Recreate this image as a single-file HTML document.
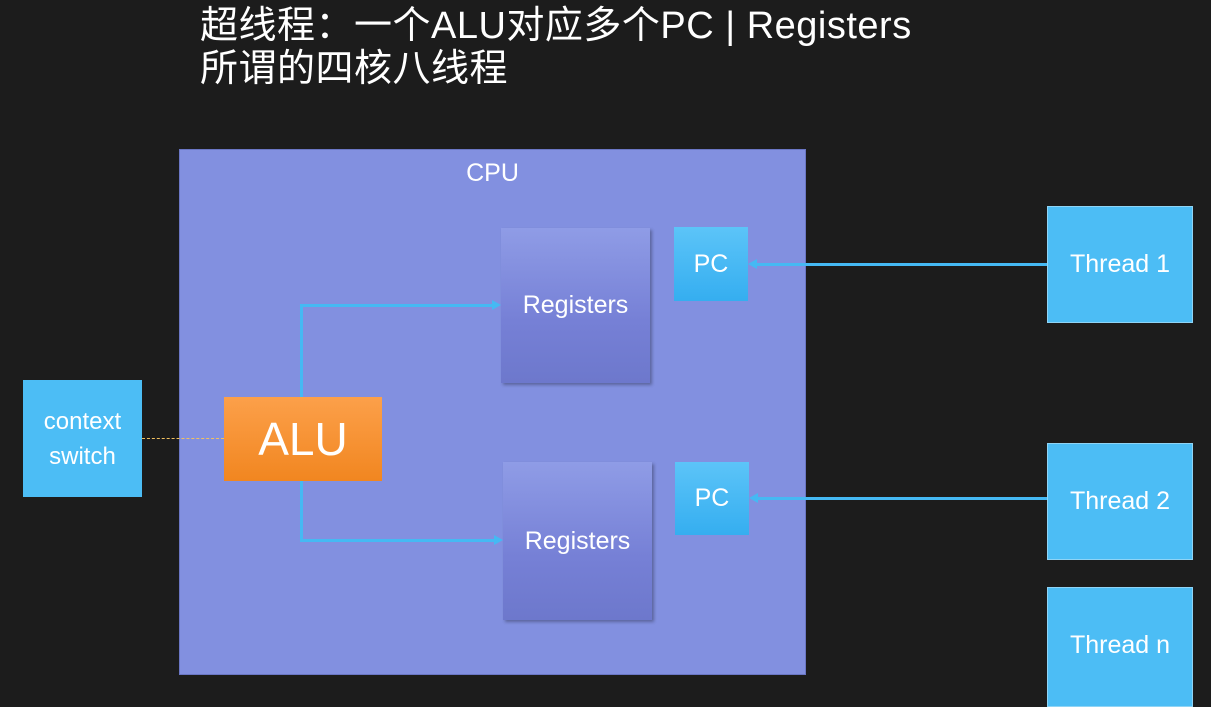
<!DOCTYPE html><html><head><style>
body{margin:0;width:1211px;height:685px;overflow:hidden;background:#1c1c1c;position:relative;font-family:"Liberation Sans","Noto Sans CJK SC",sans-serif;color:#fff}
div{position:absolute;box-sizing:border-box}
.t{display:flex;align-items:center;justify-content:center;text-align:center}
.pc{background:linear-gradient(#5cc4f8,#35aef0);font-size:25px}
.reg{background:linear-gradient(#8f9ce6,#7680d6 60%,#6d78cc);font-size:25px;box-shadow:2px 2px 3px rgba(0,0,0,.3)}
.th{background:#4cbdf5;border:1px solid #8fd4f5;font-size:25px}
.l{background:#45b9f3}
.a{width:0;height:0;border-top:5px solid transparent;border-bottom:5px solid transparent}
</style></head><body>
<div style="left:200px;top:5px;font-size:38px;line-height:43px;white-space:nowrap;letter-spacing:0.5px">超线程：一个ALU对应多个PC | Registers<br>所谓的四核八线程</div>
<div style="left:179px;top:149px;width:627px;height:526px;background:#8290e0;border:1px solid #6a76c4"></div>
<div class="t" style="left:179px;top:155px;width:627px;height:36px;font-size:25px">CPU</div>
<div class="t reg" style="left:501px;top:228px;width:149px;height:155px">Registers</div>
<div class="t reg" style="left:503px;top:462px;width:149px;height:158px">Registers</div>
<div class="t pc" style="left:674px;top:227px;width:74px;height:74px">PC</div>
<div class="t pc" style="left:675px;top:462px;width:74px;height:73px">PC</div>
<div class="t" style="left:224px;top:397px;width:158px;height:84px;background:linear-gradient(#fca04a,#f18620);font-size:46px">ALU</div>
<div class="t" style="left:23px;top:380px;width:119px;height:117px;background:#4cbdf5;font-size:24px;line-height:35px">context<br>switch</div>
<div style="left:142px;top:438px;width:82px;border-top:1px dashed #f0c060"></div>
<div class="l" style="left:300px;top:305px;width:3px;height:92px"></div>
<div class="l" style="left:300px;top:304px;width:192px;height:3px"></div>
<div class="a" style="left:492px;top:300px;border-left:9px solid #45b9f3"></div>
<div class="l" style="left:300px;top:481px;width:3px;height:60px"></div>
<div class="l" style="left:300px;top:539px;width:194px;height:3px"></div>
<div class="a" style="left:494px;top:535px;border-left:9px solid #45b9f3"></div>
<div class="l" style="left:756px;top:263px;width:292px;height:3px"></div>
<div class="a" style="left:748px;top:259px;border-right:9px solid #45b9f3"></div>
<div class="l" style="left:757px;top:497px;width:291px;height:3px"></div>
<div class="a" style="left:749px;top:493px;border-right:9px solid #45b9f3"></div>
<div class="t th" style="left:1047px;top:206px;width:146px;height:117px">Thread 1</div>
<div class="t th" style="left:1047px;top:443px;width:146px;height:117px">Thread 2</div>
<div class="t th" style="left:1047px;top:587px;width:146px;height:120px;padding-bottom:4px">Thread n</div>
</body></html>
